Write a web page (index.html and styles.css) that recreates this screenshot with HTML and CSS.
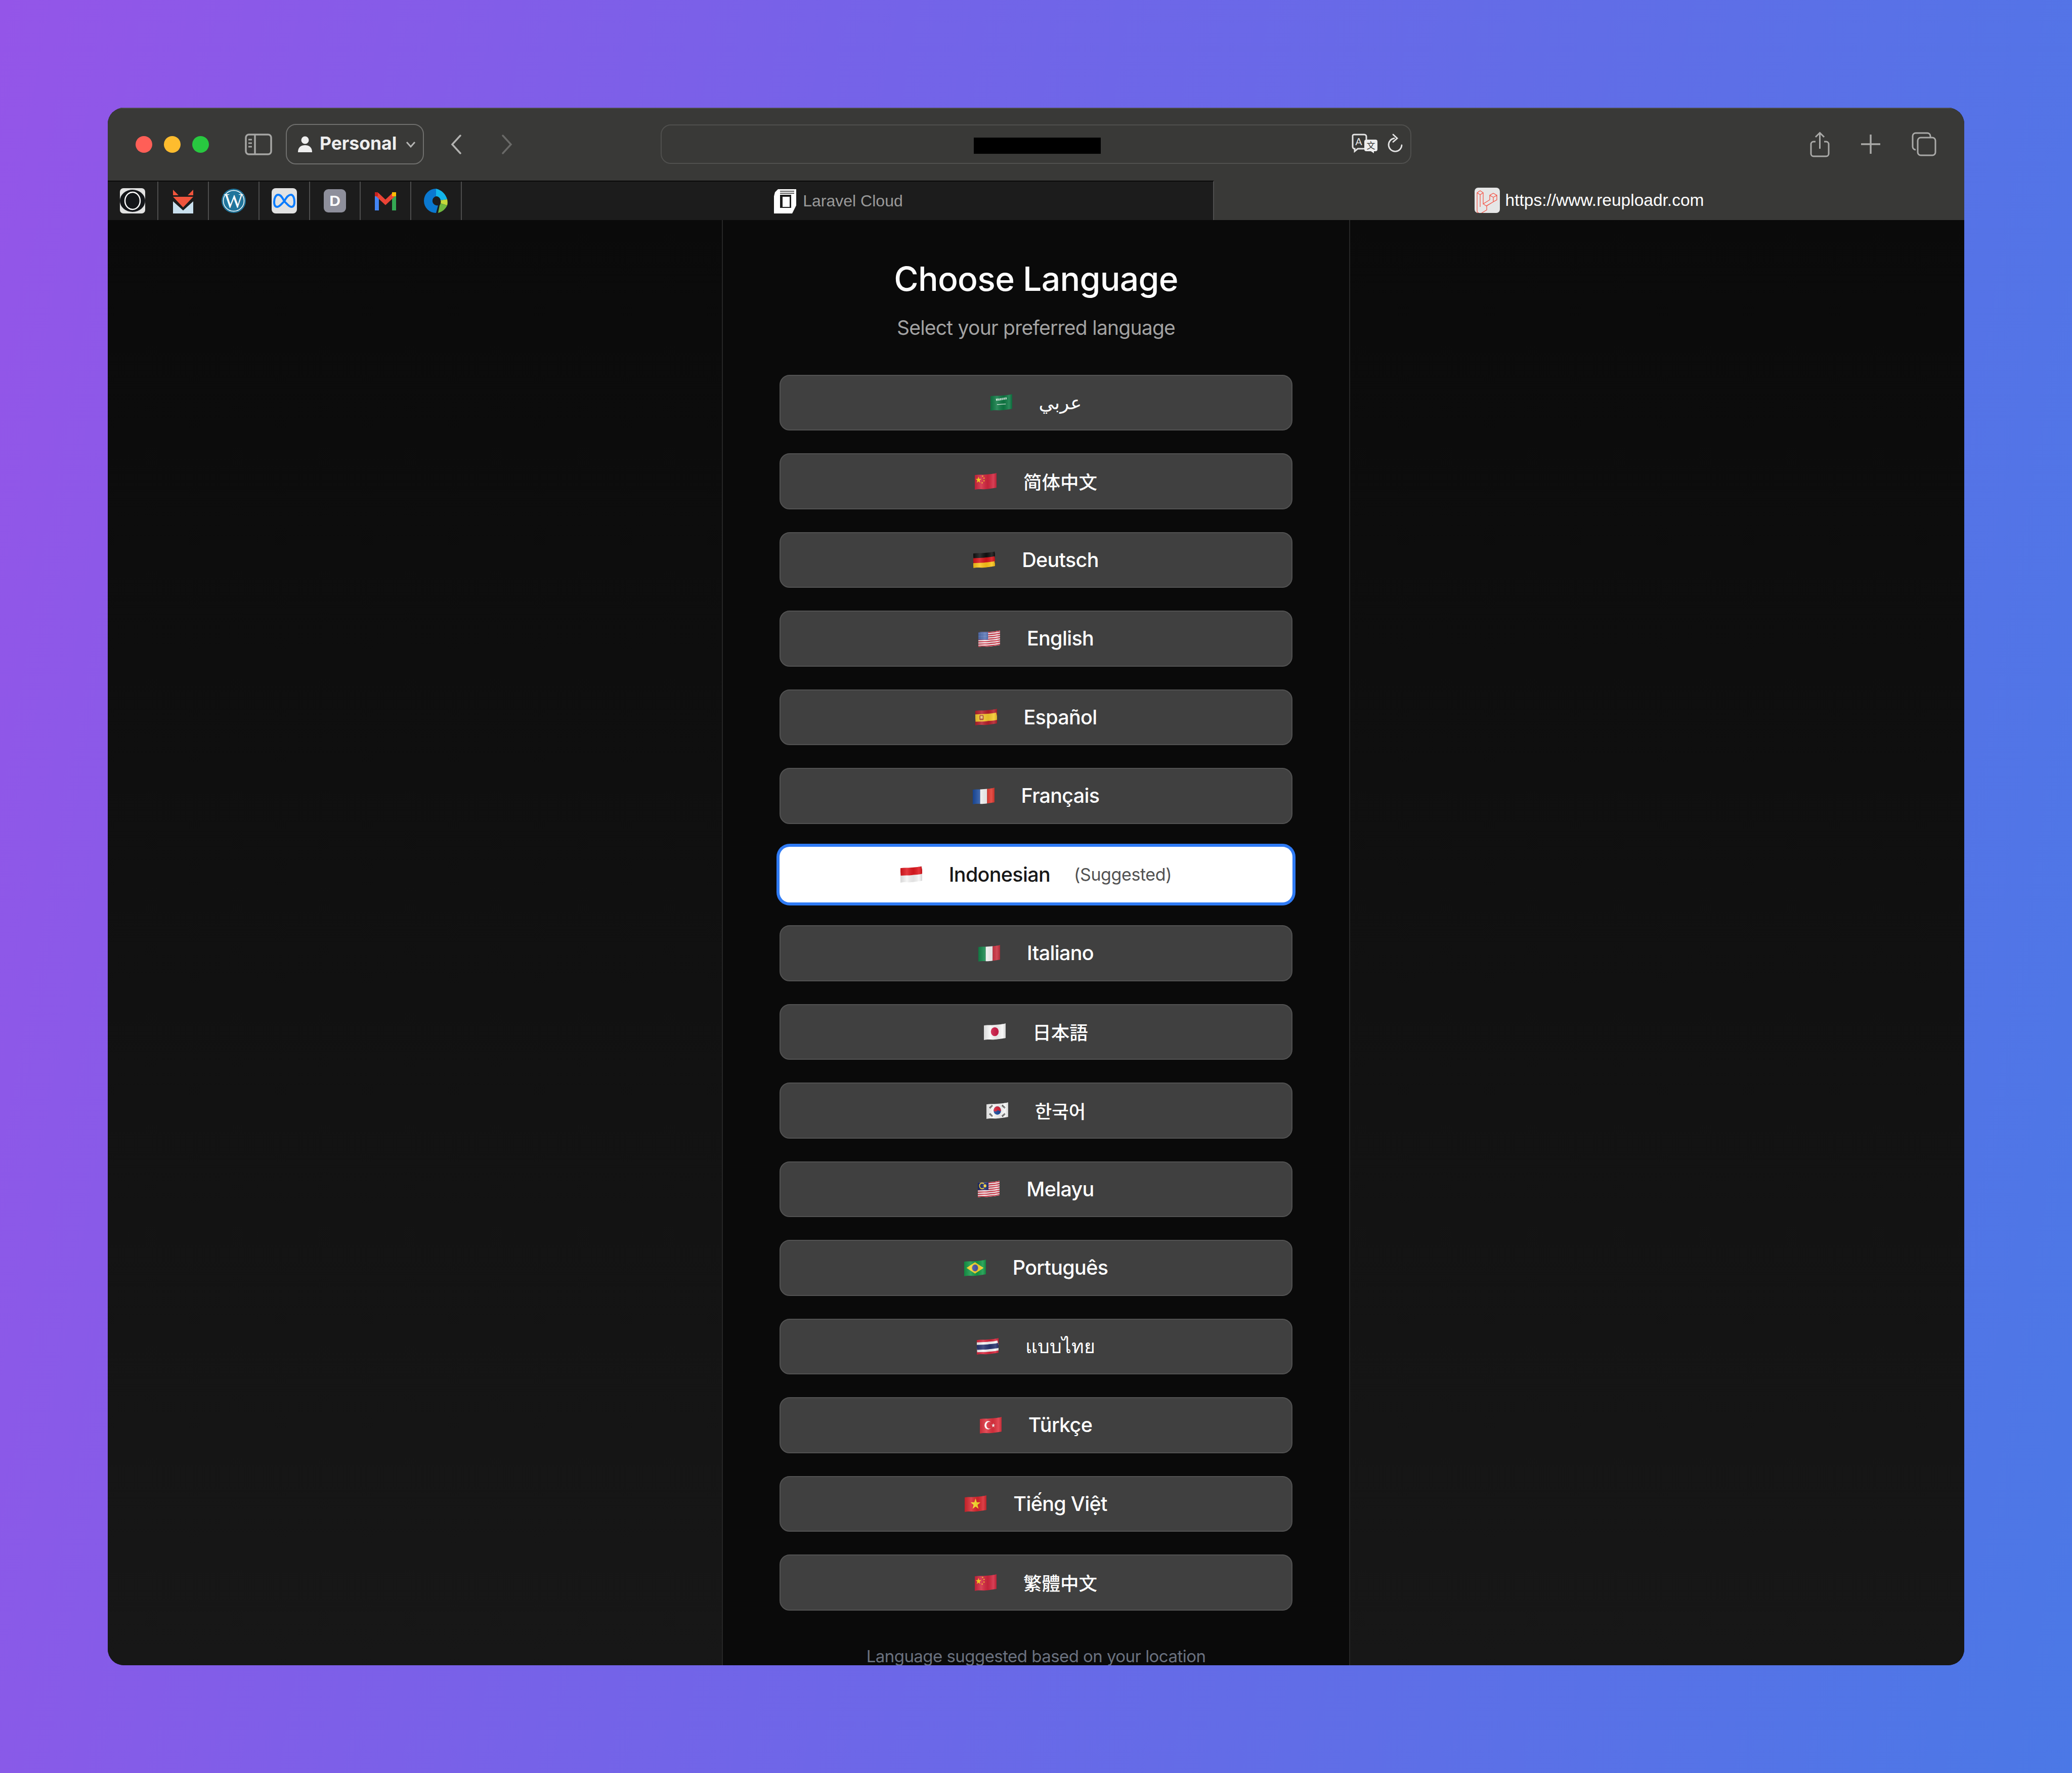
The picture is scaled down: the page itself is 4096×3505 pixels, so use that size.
FILE: index.html
```html
<!DOCTYPE html>
<html lang="en">
<head>
    <meta charset="UTF-8">
    <title>Choose Language</title>
    <link rel="stylesheet" href="styles.css">
</head>
<body>
    <!-- flag sprite, every flag shares the same wave outline -->
    <svg class="sprite" xmlns="http://www.w3.org/2000/svg">
        <defs>
            <clipPath id="wave"><path d="M0 5c12-1 14 0 24-1s16-1 23-3V29c-7 1-13 2-23 3s-14-1-24 1Z"/></clipPath>
            <linearGradient id="sheen" x1="0" x2="1" y1="0" y2="0">
                <stop offset="0" stop-color="#000" stop-opacity=".12"/>
                <stop offset=".3" stop-color="#fff" stop-opacity=".14"/>
                <stop offset=".6" stop-color="#000" stop-opacity=".08"/>
                <stop offset=".85" stop-color="#fff" stop-opacity=".12"/>
                <stop offset="1" stop-color="#000" stop-opacity=".14"/>
            </linearGradient>
        </defs>
        <symbol id="flag-sa" viewBox="0 1 47 32" preserveAspectRatio="none"><g clip-path="url(#wave)">
            <rect width="47" height="34" fill="#0e7a44"/>
            <path d="M12 12c5-1 5 0 10-1s8-1 13-2" stroke="#dff0e6" stroke-width="4" stroke-dasharray="2 1" fill="none"/>
            <path d="M14 21c7 0 12-1 19-1" stroke="#dff0e6" stroke-width="1.2" fill="none"/>
            <rect width="47" height="34" fill="url(#sheen)"/>
        </g></symbol>
        <symbol id="flag-cn" viewBox="0 1 47 32" preserveAspectRatio="none"><g clip-path="url(#wave)">
            <rect width="47" height="34" fill="#d3263e"/>
            <path d="M8 8l1.6 4.4 4.6.1-3.7 2.8 1.4 4.5L8 17.1 4.1 19.8l1.4-4.5-3.7-2.8 4.6-.1Z" fill="#fcd116"/>
            <g fill="#fcd116"><circle cx="17" cy="7" r="1.2"/><circle cx="20" cy="11" r="1.2"/><circle cx="20" cy="16" r="1.2"/><circle cx="16" cy="20" r="1.2"/></g>
            <rect width="47" height="34" fill="url(#sheen)"/>
        </g></symbol>
        <symbol id="flag-de" viewBox="0 1 47 32" preserveAspectRatio="none"><g clip-path="url(#wave)" fill="none" stroke-width="10">
            <path d="M0 9.5c12-1 14 0 24-1s16-1 23-3" stroke="#111"/>
            <path d="M0 19c12-1 14 0 24-1s16-1 23-3" stroke="#d7141a"/>
            <path d="M0 28.5c12-1 14 0 24-1s16-1 23-3" stroke="#fcc419"/>
            <rect width="47" height="34" fill="url(#sheen)" stroke="none"/>
        </g></symbol>
        <symbol id="flag-us" viewBox="0 1 47 32" preserveAspectRatio="none"><g clip-path="url(#wave)" fill="none">
            <rect width="47" height="34" fill="#f5f5f5"/>
            <g stroke="#d3384a" stroke-width="2.2">
                <path d="M0 6c12-1 14 0 24-1s16-1 23-3"/>
                <path d="M0 10.3c12-1 14 0 24-1s16-1 23-3"/>
                <path d="M0 14.6c12-1 14 0 24-1s16-1 23-3"/>
                <path d="M0 18.9c12-1 14 0 24-1s16-1 23-3"/>
                <path d="M0 23.2c12-1 14 0 24-1s16-1 23-3"/>
                <path d="M0 27.5c12-1 14 0 24-1s16-1 23-3"/>
                <path d="M0 31.8c12-1 14 0 24-1s16-1 23-3"/>
            </g>
            <rect y="2" width="21" height="17" fill="#3f5fa8"/>
            <g stroke="#cfd8ee" stroke-width="1.2" stroke-dasharray="1.2 1.6">
                <path d="M1 7H20M1 10H20M1 13H20M1 16H20"/>
            </g>
            <rect width="47" height="34" fill="url(#sheen)"/>
        </g></symbol>
        <symbol id="flag-es" viewBox="0 1 47 32" preserveAspectRatio="none"><g clip-path="url(#wave)" fill="none">
            <rect width="47" height="34" fill="#b5202c"/>
            <path d="M0 19c12-1 14 0 24-1s16-1 23-3" stroke="#f6c92c" stroke-width="14"/>
            <rect x="9" y="13" width="9" height="10" rx="2" fill="#a8452c"/>
            <rect x="11" y="15" width="5" height="5" fill="#e8c07a"/>
            <rect width="47" height="34" fill="url(#sheen)"/>
        </g></symbol>
        <symbol id="flag-fr" viewBox="0 1 47 32" preserveAspectRatio="none"><g clip-path="url(#wave)">
            <rect width="16" height="34" fill="#1c4da1"/>
            <rect x="16" width="15" height="34" fill="#f7f7f7"/>
            <rect x="31" width="16" height="34" fill="#e1382f"/>
            <rect width="47" height="34" fill="url(#sheen)"/>
        </g></symbol>
        <symbol id="flag-id" viewBox="0 1 47 32" preserveAspectRatio="none"><g clip-path="url(#wave)" fill="none" stroke-width="15">
            <path d="M0 26c12-1 14 0 24-1s16-1 23-3" stroke="#f5f5f5"/>
            <path d="M0 12c12-1 14 0 24-1s16-1 23-3" stroke="#e0181f"/>
            <rect width="47" height="34" fill="url(#sheen)" stroke="none"/>
        </g></symbol>
        <symbol id="flag-it" viewBox="0 1 47 32" preserveAspectRatio="none"><g clip-path="url(#wave)">
            <rect width="16" height="34" fill="#14854a"/>
            <rect x="16" width="15" height="34" fill="#f7f7f7"/>
            <rect x="31" width="16" height="34" fill="#c9303f"/>
            <rect width="47" height="34" fill="url(#sheen)"/>
        </g></symbol>
        <symbol id="flag-jp" viewBox="0 1 47 32" preserveAspectRatio="none"><g clip-path="url(#wave)">
            <rect width="47" height="34" fill="#f7f7f7"/>
            <circle cx="23.5" cy="17" r="8.5" fill="#d11f4a"/>
            <rect width="47" height="34" fill="url(#sheen)"/>
        </g></symbol>
        <symbol id="flag-kr" viewBox="0 1 47 32" preserveAspectRatio="none"><g clip-path="url(#wave)">
            <rect width="47" height="34" fill="#f7f7f7"/>
            <circle cx="23.5" cy="17" r="8" fill="#1f4fa0"/>
            <path d="M15.5 17a8 8 0 0 1 16 0c-2.500 3-5.500-2-8 0s-5.500 3-8 0Z" fill="#d8263c"/>
            <g stroke="#222" stroke-width="3.500" stroke-dasharray="1.500 .8">
                <path d="M7 12l6-5M34 7l6 5M7 23l6 5M34 28l6-5"/>
            </g>
            <rect width="47" height="34" fill="url(#sheen)"/>
        </g></symbol>
        <symbol id="flag-my" viewBox="0 1 47 32" preserveAspectRatio="none"><g clip-path="url(#wave)" fill="none">
            <rect width="47" height="34" fill="#f5f5f5"/>
            <g stroke="#d3384a" stroke-width="2.200">
                <path d="M0 6c12-1 14 0 24-1s16-1 23-3"/>
                <path d="M0 10.300c12-1 14 0 24-1s16-1 23-3"/>
                <path d="M0 14.600c12-1 14 0 24-1s16-1 23-3"/>
                <path d="M0 18.900c12-1 14 0 24-1s16-1 23-3"/>
                <path d="M0 23.200c12-1 14 0 24-1s16-1 23-3"/>
                <path d="M0 27.500c12-1 14 0 24-1s16-1 23-3"/>
                <path d="M0 31.800c12-1 14 0 24-1s16-1 23-3"/>
            </g>
            <rect y="2" width="23" height="17" fill="#1b2a6b"/>
            <path d="M13 7a5.500 5.500 0 1 0 0 8" stroke="#f8d030" stroke-width="2"/>
            <circle cx="15.500" cy="11" r="3" fill="#f8d030"/>
            <rect width="47" height="34" fill="url(#sheen)"/>
        </g></symbol>
        <symbol id="flag-br" viewBox="0 1 47 32" preserveAspectRatio="none"><g clip-path="url(#wave)">
            <rect width="47" height="34" fill="#149a48"/>
            <path d="M23.500 6 42 17 23.500 28 5 17Z" fill="#f5d22c"/>
            <circle cx="23.500" cy="17" r="6.500" fill="#4a58a8"/>
            <rect width="47" height="34" fill="url(#sheen)"/>
        </g></symbol>
        <symbol id="flag-th" viewBox="0 1 47 32" preserveAspectRatio="none"><g clip-path="url(#wave)" fill="none">
            <rect width="47" height="34" fill="#d8263c"/>
            <path d="M0 19c12-1 14 0 24-1s16-1 23-3" stroke="#f5f5f5" stroke-width="19"/>
            <path d="M0 19c12-1 14 0 24-1s16-1 23-3" stroke="#28336f" stroke-width="9.500"/>
            <rect width="47" height="34" fill="url(#sheen)"/>
        </g></symbol>
        <symbol id="flag-tr" viewBox="0 1 47 32" preserveAspectRatio="none"><g clip-path="url(#wave)">
            <rect width="47" height="34" fill="#e0323f"/>
            <circle cx="18" cy="17" r="8" fill="#fff"/>
            <circle cx="20.500" cy="17" r="6.500" fill="#e0323f"/>
            <path d="M29 13l1 3 3 0-2.500 2 1 3-2.500-1.800-2.500 1.800 1-3-2.500-2 3 0Z" fill="#fff"/>
            <rect width="47" height="34" fill="url(#sheen)"/>
        </g></symbol>
        <symbol id="flag-vn" viewBox="0 1 47 32" preserveAspectRatio="none"><g clip-path="url(#wave)">
            <rect width="47" height="34" fill="#d9262e"/>
            <path d="M23.500 7l2.600 7.400 7.900.2-6.300 4.800 2.300 7.600-6.500-4.500-6.500 4.500 2.300-7.600-6.300-4.800 7.900-.2Z" fill="#fbdc2a"/>
            <rect width="47" height="34" fill="url(#sheen)"/>
        </g></symbol>
    </svg>

    <div class="window">
        <div class="toolbar">
            <div class="lights">
                <span class="light red"></span>
                <span class="light yellow"></span>
                <span class="light green"></span>
            </div>
            <svg class="icon-sidebar" viewBox="0 0 54 43" fill="none" stroke="#a6a6a4" stroke-width="3.500">
                <rect x="2" y="2" width="50" height="39" rx="6"/>
                <path d="M20 2V41"/>
                <path d="M7 12h7M7 19h7M7 26h7" stroke-width="3"/>
            </svg>
            <div class="profile">
                <svg class="icon-person" viewBox="0 0 30 32" fill="#eee">
                    <circle cx="15" cy="8" r="7.500"/>
                    <path d="M1 32c0-10 6-14 14-14s14 4 14 14Z"/>
                </svg>
                <span class="profile-name">Personal</span>
                <svg class="icon-caret" viewBox="0 0 20 13" fill="none" stroke="#b5b5b3" stroke-width="3">
                    <path d="M2 2l8 9 8-9"/>
                </svg>
            </div>
            <svg class="icon-back" viewBox="0 0 22 39" fill="none" stroke="#b3b3b1" stroke-width="3.500" stroke-linecap="round">
                <path d="M19 2 3 19.500 19 37"/>
            </svg>
            <svg class="icon-forward" viewBox="0 0 22 39" fill="none" stroke="#6a6a68" stroke-width="3.500" stroke-linecap="round">
                <path d="M3 2l16 17.500L3 37"/>
            </svg>
            <div class="address">
                <span class="redacted"></span>
                <div class="address-icons">
                    <svg class="icon-translate" viewBox="0 0 53 39">
                        <path d="M6 2h20a4 4 0 0 1 4 4v20a4 4 0 0 1-4 4H13l-6 5v-5a4 4 0 0 1-4-4V6a3 3 0 0 1 3-4Z" fill="#393937" stroke="#e4e4e4" stroke-width="3"/>
                        <text x="15" y="23" class="translate-a">A</text>
                        <path d="M30 12h18a4 4 0 0 1 4 4v15a4 4 0 0 1-4 4h-3v4l-6-4h-9a4 4 0 0 1-4-4V16a4 4 0 0 1 4-4Z" fill="#eee"/>
                        <text x="39" y="30" class="translate-b">文</text>
                    </svg>
                    <svg class="icon-reload" viewBox="0 0 30 39" fill="none" stroke="#e4e4e4" stroke-width="2.800" stroke-linecap="round">
                        <path d="M13 9.500A13 13 0 1 0 28 23"/>
                        <path d="M11 2l8 7.500-8 7"/>
                    </svg>
                </div>
            </div>
            <svg class="icon-share" viewBox="0 0 39 51" fill="none" stroke="#aaaaa8" stroke-width="3">
                <path d="M11 20H7a5 5 0 0 0-5 5v19a5 5 0 0 0 5 5h25a5 5 0 0 0 5-5V25a5 5 0 0 0-5-5h-4"/>
                <path d="M19.500 34V3M11 11l8.500-8.500L28 11"/>
            </svg>
            <svg class="icon-plus" viewBox="0 0 38 38" fill="none" stroke="#aaaaa8" stroke-width="3.500">
                <path d="M19 0V38M0 19H38"/>
            </svg>
            <svg class="icon-tabs" viewBox="0 0 49 48" fill="none" stroke="#aaaaa8" stroke-width="3">
                <path d="M8 35a6 6 0 0 1-6-6V8a6 6 0 0 1 6-6h23a6 6 0 0 1 6 6v3"/>
                <rect x="12" y="11" width="35" height="35" rx="6"/>
            </svg>
        </div>

        <div class="tabbar">
            <div class="pins">
                <div class="pin">
                    <svg class="favicon" viewBox="0 0 50 50">
                        <rect width="50" height="50" rx="7" fill="#e2e2e2"/>
                        <ellipse cx="25" cy="25" rx="25" ry="22" fill="#14161a"/>
                        <ellipse cx="25" cy="25" rx="15" ry="17" fill="none" stroke="#fff" stroke-width="2.500"/>
                    </svg>
                </div>
                <div class="pin">
                    <svg class="favicon" viewBox="0 0 50 50">
                        <path d="M5 3l11 11H5ZM45 3 34 14h11ZM5 17h40L25 38Z" fill="#f0543c"/>
                        <path d="M5 26 25 44 45 26V50H5Z" fill="#c9e0ee"/>
                    </svg>
                </div>
                <div class="pin">
                    <svg class="favicon" viewBox="0 0 50 50">
                        <circle cx="25" cy="25" r="24" fill="#21759b"/>
                        <circle cx="25" cy="25" r="20.500" fill="none" stroke="#fff" stroke-width="1.500"/>
                        <text x="25" y="38" class="wp-mark">W</text>
                    </svg>
                </div>
                <div class="pin">
                    <svg class="favicon" viewBox="0 0 50 50">
                        <rect width="50" height="50" rx="8" fill="#e2e2e2"/>
                        <path d="M25 26C21 18 18 13 13 13 8 13 5 20 5 27c0 6 2 10 6 10 5 0 10-8 14-11 4-8 8-13 13-13 5 0 7 7 7 14 0 6-2 10-6 10-5 0-10-8-14-11Z" fill="none" stroke="#0a7cff" stroke-width="4"/>
                    </svg>
                </div>
                <div class="pin">
                    <svg class="favicon" viewBox="0 0 50 50">
                        <rect x="3" y="2" width="44" height="46" rx="9" fill="#8e8f9b"/>
                        <text x="25" y="35" class="d-mark">D</text>
                    </svg>
                </div>
                <div class="pin">
                    <svg class="favicon" viewBox="0 0 50 50">
                        <path d="M8 12V44" stroke="#4285f4" stroke-width="8" fill="none"/>
                        <path d="M42 12V44" stroke="#34a853" stroke-width="8" fill="none"/>
                        <path d="M8 12 25 28 42 12" stroke="#ea4335" stroke-width="8" fill="none"/>
                        <path d="M38 8h8v8h-8Z" fill="#fbbc04"/>
                        <path d="M4 8h6v8H4Z" fill="#c5221f"/>
                    </svg>
                </div>
                <div class="pin">
                    <svg class="favicon" viewBox="0 0 50 50">
                        <path d="M25 1A24 24 0 0 0 25 49l4-15A9 9 0 0 1 25 16Z" fill="#0a78d0"/>
                        <path d="M25 1c12 3 19 11 22 21L34 24a9 9 0 0 0-9-8Z" fill="#12b5ea"/>
                        <path d="M47 22c1 4 1 9 0 12L34 30a9 9 0 0 0 0-6Z" fill="#c5d93a"/>
                        <path d="M47 34c-3 7-10 13-18 15l3-15a9 9 0 0 0 2-4Z" fill="#6fb83f"/>
                    </svg>
                </div>
            </div>
            <div class="tab tab-active">
                <svg class="favicon" viewBox="0 0 50 50">
                    <path d="M6 8l6-6h36v32l-8 16H4V16Z" fill="#fff"/>
                    <path d="M16 6h28M16 10h28" stroke="#222" stroke-width="1.500"/>
                    <rect x="16" y="13" width="22" height="26" fill="#1c1c1c"/>
                    <rect x="21" y="17" width="14" height="20" fill="#fff"/>
                </svg>
                <span class="tab-title">Laravel Cloud</span>
            </div>
            <div class="tab tab-current">
                <svg class="favicon" viewBox="0 0 50 50">
                    <rect width="50" height="50" rx="7" fill="#e6e6e6"/>
                    <path d="M5 10l6-4 6 4v22l13-8v-9l7-4 7 4v9l-7 4-13 8v8l-13 8-6-4Z M5 10l6 4 6-4M11 14v24M30 15l7 4 7-4M37 19v9M17 32l6 4 14-8" fill="none" stroke="#f4574a" stroke-width="1.300"/>
                </svg>
                <span class="tab-title">https://www.reuploadr.com</span>
            </div>
        </div>

        <main class="page">
            <section class="panel">
                <h1>Choose Language</h1>
                <p class="subtitle">Select your preferred language</p>
                <div class="lang-list">
                    <button class="lang"><svg class="flag"><use href="#flag-sa"/></svg><span lang="ar">عربي</span></button>
                    <button class="lang"><svg class="flag"><use href="#flag-cn"/></svg><span lang="zh-CN">简体中文</span></button>
                    <button class="lang"><svg class="flag"><use href="#flag-de"/></svg><span>Deutsch</span></button>
                    <button class="lang"><svg class="flag"><use href="#flag-us"/></svg><span>English</span></button>
                    <button class="lang"><svg class="flag"><use href="#flag-es"/></svg><span>Español</span></button>
                    <button class="lang"><svg class="flag"><use href="#flag-fr"/></svg><span>Français</span></button>
                    <button class="lang lang-suggested"><svg class="flag"><use href="#flag-id"/></svg><span>Indonesian</span><span class="suggested">(Suggested)</span></button>
                    <button class="lang"><svg class="flag"><use href="#flag-it"/></svg><span>Italiano</span></button>
                    <button class="lang"><svg class="flag"><use href="#flag-jp"/></svg><span lang="ja">日本語</span></button>
                    <button class="lang"><svg class="flag"><use href="#flag-kr"/></svg><span lang="ko">한국어</span></button>
                    <button class="lang"><svg class="flag"><use href="#flag-my"/></svg><span>Melayu</span></button>
                    <button class="lang"><svg class="flag"><use href="#flag-br"/></svg><span>Português</span></button>
                    <button class="lang"><svg class="flag"><use href="#flag-th"/></svg><span lang="th">แบบไทย</span></button>
                    <button class="lang"><svg class="flag"><use href="#flag-tr"/></svg><span>Türkçe</span></button>
                    <button class="lang"><svg class="flag"><use href="#flag-vn"/></svg><span>Tiếng Việt</span></button>
                    <button class="lang"><svg class="flag"><use href="#flag-cn"/></svg><span lang="zh-TW">繁體中文</span></button>
                </div>
                <p class="footnote">Language suggested based on your location</p>
            </section>
        </main>
    </div>
</body>
</html>
```

FILE: styles.css
```css
html, body {
    height: 100%;
}
body {
    margin: 0;
    box-sizing: border-box;
    padding: 213px;
    display: flex;
    background: linear-gradient(100deg, #9455e8 0%, #7662e8 35%, #4b78e6 100%);
    font-family: Inter, "Noto Sans CJK SC", "DejaVu Sans", sans-serif;
    overflow: hidden;
}
.sprite {
    display: block;
    width: 0;
    height: 0;
}
.window {
    flex: 1;
    display: flex;
    flex-direction: column;
    border-radius: 32px;
    overflow: hidden;
    background: #0b0b0b;
}

/* toolbar */
.toolbar {
    flex: 0 0 144px;
    display: flex;
    align-items: center;
    padding-left: 54.5px;
    background: #393937;
    box-shadow: inset 0 2px 0 #4a4a48;
}
.lights {
    display: flex;
    gap: 23px;
}
.light {
    width: 33px;
    height: 33px;
    border-radius: 50%;
}
.red { background: #ff5f57; }
.yellow { background: #febc2e; }
.green { background: #28c840; }
.icon-sidebar {
    width: 54px;
    height: 43px;
    margin-left: 71.5px;
}
.profile {
    box-sizing: border-box;
    width: 273px;
    height: 80px;
    margin-left: 27px;
    padding-left: 21px;
    display: flex;
    align-items: center;
    border: 2.5px solid #6f6f6d;
    border-radius: 20px;
}
.icon-person {
    width: 30px;
    height: 32px;
}
.profile-name {
    margin: -3px 0 0 14px;
    font-size: 35.5px;
    font-weight: 700;
    color: #eee;
}
.icon-caret {
    width: 20px;
    height: 13px;
    margin-left: 18px;
}
.icon-back {
    width: 22px;
    height: 39px;
    margin-left: 53px;
}
.icon-forward {
    width: 22px;
    height: 39px;
    margin-left: 78px;
}
.address {
    box-sizing: border-box;
    width: 1484px;
    height: 78px;
    margin-left: 293px;
    display: flex;
    align-items: center;
    justify-content: center;
    position: relative;
    border: 2.5px solid #50504e;
    border-radius: 20px;
}
.redacted {
    width: 251px;
    height: 32px;
    margin: 5px 0 0 4px;
    background: #000;
}
.address-icons {
    position: absolute;
    right: 15px;
    top: 16px;
    display: flex;
    gap: 19px;
}
.icon-translate {
    width: 53px;
    height: 39px;
}
.icon-reload {
    width: 30px;
    height: 39px;
}
.translate-a {
    font-family: "Liberation Sans", sans-serif;
    font-size: 20px;
    fill: #e4e4e4;
    text-anchor: middle;
}
.translate-b {
    font-family: "Noto Sans CJK SC", sans-serif;
    font-size: 17px;
    fill: #333;
    text-anchor: middle;
}
.icon-share {
    width: 39px;
    height: 51px;
    margin-left: 788px;
}
.icon-plus {
    width: 38px;
    height: 38px;
    margin-left: 62px;
}
.icon-tabs {
    width: 49px;
    height: 48px;
    margin-left: 62px;
}

/* tab bar */
.tabbar {
    flex: 0 0 78px;
    display: flex;
}
.pins {
    display: flex;
    background: #1c1c1c;
    border-top: 2px solid #0a0a0a;
}
.pin {
    box-sizing: border-box;
    width: 100px;
    display: flex;
    align-items: center;
    justify-content: center;
    border-right: 2px solid #4d4d4d;
}
.favicon {
    width: 50px;
    height: 50px;
}
.wp-mark {
    font-family: "Liberation Serif", serif;
    font-size: 40px;
    font-weight: 400;
    fill: #fff;
    text-anchor: middle;
}
.d-mark {
    font-family: "Liberation Sans", sans-serif;
    font-size: 30px;
    font-weight: 700;
    fill: #fff;
    text-anchor: middle;
}
.tab {
    box-sizing: border-box;
    display: flex;
    align-items: center;
    justify-content: center;
    gap: 11px;
}
.tab-active {
    width: 1487px;
    background: #1c1c1c;
    border-top: 2px solid #0a0a0a;
    border-right: 2px solid #4d4d4d;
    color: #9a9a9a;
}
.tab-current {
    flex: 1;
    background: #393937;
    color: #fff;
}
.tab-title {
    font-family: "Liberation Sans", Arial, sans-serif;
    font-size: 32px;
}
.tab-current .tab-title {
    font-size: 33.5px;
}

/* page */
.page {
    flex: 1;
    min-height: 0;
    display: flex;
    justify-content: center;
    background: linear-gradient(180deg, #0a0a0a 0%, #171717 100%);
}
.panel {
    box-sizing: border-box;
    width: 1242px;
    padding: 76px 112px 0;
    background: #0a0a0a;
    border-left: 2px solid #262626;
    border-right: 2px solid #262626;
    text-align: center;
}
h1 {
    margin: 0;
    font-size: 66px;
    line-height: 80px;
    font-weight: 500;
    letter-spacing: -0.7px;
    color: #fff;
}
.subtitle {
    margin: 32px 0 67.5px;
    font-size: 39px;
    line-height: 50px;
    letter-spacing: -0.75px;
    color: #a3a3a3;
}
.lang-list {
    display: flex;
    flex-direction: column;
    gap: 45px;
}
.lang {
    box-sizing: border-box;
    height: 110.5px;
    display: flex;
    align-items: center;
    justify-content: center;
    gap: 53px;
    background: #404040;
    border: 2.5px solid #525252;
    border-radius: 20px;
    color: #fff;
    font: inherit;
    font-size: 39.5px;
    font-weight: 500;
    letter-spacing: -0.7px;
}
.lang span:lang(zh-CN) {
    font-size: 36.5px;
    letter-spacing: 0;
}
.lang span:lang(zh-TW) {
    font-family: Inter, "Noto Sans CJK TC", sans-serif;
    font-size: 36.5px;
    letter-spacing: 0;
}
.lang span:lang(ja) {
    font-family: Inter, "Noto Sans CJK JP", sans-serif;
    font-size: 36.5px;
    letter-spacing: 0;
}
.lang span:lang(ko) {
    font-family: Inter, "Noto Sans CJK KR", sans-serif;
    font-size: 36.5px;
    letter-spacing: 0;
}
.lang span:lang(th), .lang span:lang(ar) {
    font-size: 37.5px;
    letter-spacing: 0;
}
.flag {
    width: 43px;
    height: 33px;
}
.lang-suggested {
    background: #fff;
    border: none;
    box-shadow: 0 0 0 6px #2f7bf5;
    color: #171717;
}
.suggested {
    margin-left: -6px;
    font-size: 34px;
    font-weight: 400;
    letter-spacing: -0.4px;
    color: #525252;
}
.footnote {
    margin: 65px 0 0;
    font-size: 33px;
    line-height: 50px;
    letter-spacing: -0.55px;
    color: #6b7280;
}
```
